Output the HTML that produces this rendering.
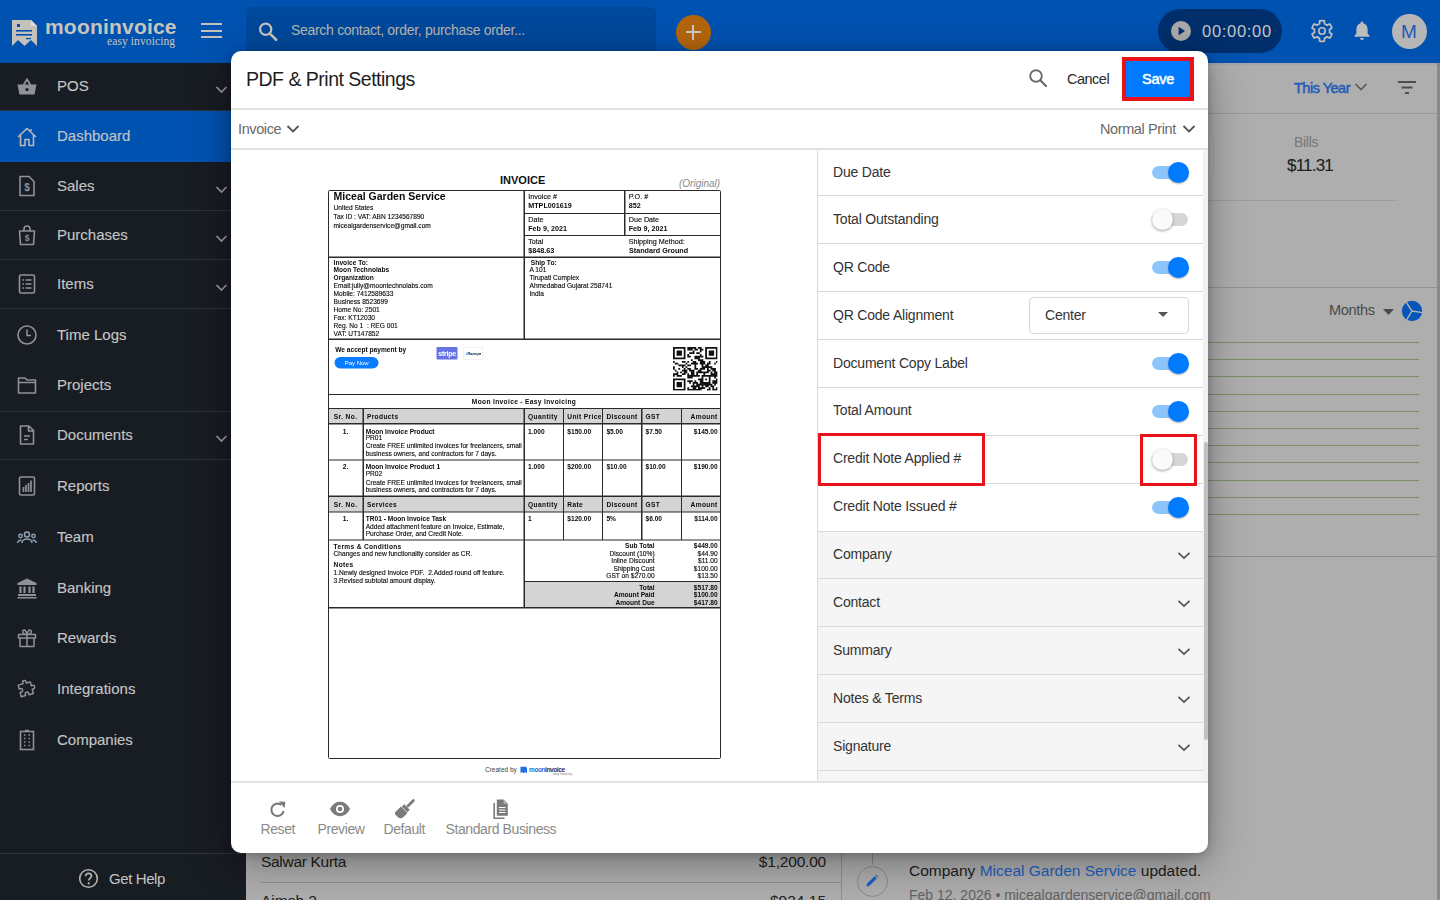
<!DOCTYPE html>
<html><head><meta charset="utf-8">
<style>
*{box-sizing:border-box;margin:0;padding:0}
html,body{width:1440px;height:900px;overflow:hidden}
body{position:relative;background:#aeaeae;font-family:"Liberation Sans",sans-serif;color:#222}
.abs{position:absolute}
#hdr{left:0;top:0;width:1440px;height:63px;background:#0052b1}
#side{left:0;top:62px;width:246px;height:838px;background:#181c23}
.si{position:absolute;left:0;width:246px;height:50px;color:#c4c4c4;font-size:15px}
.si .t{position:absolute;left:57px;top:0;line-height:50px;-webkit-text-stroke:0.15px #c4c4c4}
.si svg{position:absolute;left:16px;top:15px}
.si .chev{position:absolute;left:215px;top:24px}
.sdiv{position:absolute;left:0;width:246px;height:1px;background:#2f343a}
#modal{left:230.5px;top:51px;width:977.5px;height:802px;background:#fff;border-radius:10px;box-shadow:0 10px 40px rgba(0,0,0,.35),0 2px 10px rgba(0,0,0,.2);overflow:hidden}
.hl{position:absolute;height:1px;background:#dedede}
.row{position:absolute;left:587px;width:385px;height:48px;border-bottom:1px solid #dcdcdc;background:#fff}
.row .lb{position:absolute;left:15px;top:0;line-height:47px;font-size:14.5px;color:#333;letter-spacing:-0.2px}
.row.acc{background:#f5f5f5}
.tg{position:absolute;left:334px;top:17px;width:36px;height:13px;border-radius:7px;background:#8fc3fb}
.tg i{position:absolute;left:16px;top:-4px;width:21px;height:21px;border-radius:50%;background:#007bff;box-shadow:0 1px 3px rgba(0,0,0,.25)}
.tg.off{background:#d5d5d5}
.tg.off i{left:-1px;background:#fafafa;box-shadow:0 1px 3px rgba(0,0,0,.35)}
.acc svg{position:absolute;left:358px;top:19px}
</style></head><body>

<!-- CONTENT BG (visible parts) -->
<div class="abs" style="left:246px;top:63px;width:1194px;height:1.5px;background:#9e9fb0;opacity:.6"></div>
<div class="abs" style="left:1294px;top:79px;font-size:14.5px;color:#1f5fc0;line-height:18px;letter-spacing:-0.5px;-webkit-text-stroke:0.5px #1f5bb8;color:#1f5bb8">This Year</div>
<svg class="abs" style="left:1354px;top:82px" width="14" height="10" viewBox="0 0 14 10"><path d="M1.5 2 L7 7.5 L12.5 2" fill="none" stroke="#5a5a5a" stroke-width="1.7"/></svg>
<svg class="abs" style="left:1397px;top:80px" width="20" height="16" viewBox="0 0 20 16"><path d="M1 2h18M4.5 7.5h11M8 13h4" stroke="#4e4e4e" stroke-width="2"/></svg>
<div class="abs" style="left:246px;top:113px;width:1191px;height:1px;background:#999"></div>
<div class="abs" style="left:1213px;top:138px;width:1px;height:37px;background:#a2a2a2"></div>
<div class="abs" style="left:1294px;top:134px;font-size:14px;color:#767676;line-height:17px;letter-spacing:-0.3px">Bills</div>
<div class="abs" style="left:1287px;top:155px;font-size:17px;color:#202020;line-height:22px;letter-spacing:-0.8px;-webkit-text-stroke:0.1px #202020">$11.31</div>
<div class="abs" style="left:1208px;top:200px;width:190px;height:1px;background:#9d9d9d"></div>
<div class="abs" style="left:1208px;top:287px;width:1229px;height:1px;background:#939393"></div>
<div class="abs" style="left:1329px;top:301px;font-size:14.5px;color:#4a4a4a;line-height:18px;letter-spacing:-0.3px">Months</div>
<svg class="abs" style="left:1383px;top:308.5px" width="11" height="6" viewBox="0 0 11 6"><path d="M0 0h11L5.5 6z" fill="#4a4a4a"/></svg>
<svg class="abs" style="left:1401px;top:300px" width="22" height="22" viewBox="0 0 22 22"><circle cx="11" cy="11" r="10.2" fill="#0656b9"/><path d="M11 11 L5.2 2.2 M11 11 L21.5 12.6 M11 11 L5.4 20.2" stroke="#b2b2b2" stroke-width="1.4"/></svg>
<div class="abs" style="left:1208px;top:342px;width:211px;height:1px;background:#7a8f62"></div>
<div class="abs" style="left:1208px;top:359px;width:211px;height:1px;background:#7a8f62"></div>
<div class="abs" style="left:1208px;top:376px;width:211px;height:1px;background:#7a8f62"></div>
<div class="abs" style="left:1208px;top:394px;width:211px;height:1px;background:#7a8f62"></div>
<div class="abs" style="left:1208px;top:411px;width:211px;height:1px;background:#7a8f62"></div>
<div class="abs" style="left:1208px;top:428px;width:211px;height:1px;background:#7a8f62"></div>
<div class="abs" style="left:1208px;top:445px;width:211px;height:1px;background:#7a8f62"></div>
<div class="abs" style="left:1208px;top:462px;width:211px;height:1px;background:#7a8f62"></div>
<div class="abs" style="left:1208px;top:480px;width:211px;height:1px;background:#7a8f62"></div>
<div class="abs" style="left:1208px;top:497px;width:211px;height:1px;background:#7a8f62"></div>
<div class="abs" style="left:1208px;top:514px;width:211px;height:1px;background:#7a8f62"></div>

<div class="abs" style="left:1208px;top:556px;width:1229px;height:1px;background:#8f8f8f"></div>
<div class="abs" style="left:1437px;top:62px;width:3px;height:838px;background:#8a8a8a"></div>
<!-- bottom strip -->
<div class="abs" style="left:841px;top:853px;width:1px;height:47px;background:#8f8f8f"></div>
<div class="abs" style="left:261px;top:853px;font-size:15.5px;color:#202020;line-height:18px;letter-spacing:-0.3px;top:853px">Salwar Kurta</div>
<div class="abs" style="left:740px;top:853px;width:86px;text-align:right;font-size:15.5px;color:#202020;line-height:18px;letter-spacing:-0.2px">$1,200.00</div>
<div class="abs" style="left:261px;top:882px;width:580px;height:1px;background:#8e8e8e"></div>
<div class="abs" style="left:261px;top:891.5px;font-size:15.5px;color:#202020;line-height:18px">Aimsh 2</div>
<div class="abs" style="left:740px;top:891.5px;width:86px;text-align:right;font-size:15.5px;color:#202020;line-height:18px">$924.15</div>
<div class="abs" style="left:872px;top:853px;width:1px;height:12px;background:#8a8a8a"></div>
<div class="abs" style="left:856.5px;top:865.5px;width:31px;height:31px;border-radius:50%;border:1px solid #8a8a8a"></div>
<svg class="abs" style="left:865px;top:874px" width="14" height="14" viewBox="0 0 14 14"><path d="M1.5 12.5 L2 9.8 L9.6 2.2 L11.8 4.4 L4.2 12 Z M10.4 1.4 L11.2 0.8 L13.2 2.8 L12.6 3.6 Z" fill="#1c5ec4"/></svg>
<div class="abs" style="left:909px;top:862px;font-size:15.5px;color:#1d1d1d;line-height:18px">Company <span style="color:#1f5fc0">Miceal Garden Service</span> updated.</div>
<div class="abs" style="left:909px;top:887px;font-size:14px;color:#626262;line-height:17px">Feb 12, 2026 &#8226; micealgardenservice@gmail.com</div>
<!-- SIDEBAR -->
<div id="side" class="abs">
  <div class="abs" style="left:0;top:49px;width:246px;height:51px;background:#0052b1"></div>
  <div class="sdiv" style="top:48px"></div>
  <div class="sdiv" style="top:148px"></div>
  <div class="sdiv" style="top:197px"></div>
  <div class="sdiv" style="top:246px"></div>
  <div class="sdiv" style="top:349px"></div>
  <div class="sdiv" style="top:397px"></div>
  <div class="sdiv" style="top:791px;background:#30353b"></div>
</div>
<div class="si" style="top:61px"><span class="t">POS</span>
  <svg width="22" height="22" viewBox="0 0 22 22" style="top:15px"><path d="M7.5 9 L11 3.5 L14.5 9" fill="none" stroke="#8f9297" stroke-width="1.8"/><path d="M1.5 8.5h19l-2 10h-15z" fill="#8f9297"/><circle cx="11" cy="13.5" r="1.6" fill="#181c23"/></svg>
  <svg class="chev" width="13" height="9" viewBox="0 0 13 9"><path d="M1.5 2 L6.5 7 L11.5 2" fill="none" stroke="#9c9c9c" stroke-width="1.7"/></svg></div>
<div class="si" style="top:111px"><span class="t">Dashboard</span>
  <svg width="22" height="22" viewBox="0 0 22 22" style="top:15px"><path d="M2 11 L11 2.5 L20 11 M4.5 8.8 V19.5 H9 V13.5 H13 V19.5 H17.5 V8.8 M15 5 V3" fill="none" stroke="#b9b9b9" stroke-width="1.6" stroke-linejoin="round"/></svg></div>
<div class="si" style="top:161px"><span class="t">Sales</span>
  <svg width="22" height="22" viewBox="0 0 22 22" style="top:14px"><path d="M4 1.5 H13 L18 6.5 V20.5 H4 Z" fill="none" stroke="#8f9297" stroke-width="1.6" stroke-linejoin="round"/><text x="11" y="15.5" font-size="10" font-weight="bold" fill="#8f9297" text-anchor="middle" font-family="Liberation Sans">$</text></svg>
  <svg class="chev" width="13" height="9" viewBox="0 0 13 9"><path d="M1.5 2 L6.5 7 L11.5 2" fill="none" stroke="#9c9c9c" stroke-width="1.7"/></svg></div>
<div class="si" style="top:210px"><span class="t">Purchases</span>
  <svg width="22" height="22" viewBox="0 0 22 22" style="top:14px"><path d="M3.5 7 H18.5 L17.5 20.5 H4.5 Z M8 7 V5 A3 3 0 0 1 14 5 V7" fill="none" stroke="#8f9297" stroke-width="1.6" stroke-linejoin="round"/><text x="11" y="17" font-size="8.5" font-weight="bold" fill="#8f9297" text-anchor="middle" font-family="Liberation Sans">$</text></svg>
  <svg class="chev" width="13" height="9" viewBox="0 0 13 9"><path d="M1.5 2 L6.5 7 L11.5 2" fill="none" stroke="#9c9c9c" stroke-width="1.7"/></svg></div>
<div class="si" style="top:259px"><span class="t">Items</span>
  <svg width="22" height="22" viewBox="0 0 22 22" style="top:14px"><rect x="3.5" y="2" width="15" height="18" rx="1.5" fill="none" stroke="#8f9297" stroke-width="1.6"/><path d="M6.5 7h1.5M9.5 7h6M6.5 11h1.5M9.5 11h6M6.5 15h1.5M9.5 15h6" stroke="#8f9297" stroke-width="1.5"/></svg>
  <svg class="chev" width="13" height="9" viewBox="0 0 13 9"><path d="M1.5 2 L6.5 7 L11.5 2" fill="none" stroke="#9c9c9c" stroke-width="1.7"/></svg></div>
<div class="si" style="top:310px"><span class="t">Time Logs</span>
  <svg width="22" height="22" viewBox="0 0 22 22" style="top:14px"><circle cx="11" cy="11" r="9" fill="none" stroke="#8f9297" stroke-width="1.6"/><path d="M11 5.5V11.5H15" fill="none" stroke="#8f9297" stroke-width="1.6"/></svg></div>
<div class="si" style="top:360px"><span class="t">Projects</span>
  <svg width="22" height="22" viewBox="0 0 22 22" style="top:14px"><path d="M2.5 4 H9 L11 6 H19.5 V19 H2.5 Z M2.5 8.5 H19.5" fill="none" stroke="#8f9297" stroke-width="1.6" stroke-linejoin="round"/></svg></div>
<div class="si" style="top:410px"><span class="t">Documents</span>
  <svg width="22" height="22" viewBox="0 0 22 22" style="top:14px"><path d="M4.5 2 H13 L17.5 6.5 V20 H4.5 Z M12.5 2.5 V7 H17 M8 12h6M8 15.5h4" fill="none" stroke="#8f9297" stroke-width="1.6" stroke-linejoin="round"/></svg>
  <svg class="chev" width="13" height="9" viewBox="0 0 13 9"><path d="M1.5 2 L6.5 7 L11.5 2" fill="none" stroke="#9c9c9c" stroke-width="1.7"/></svg></div>
<div class="si" style="top:461px"><span class="t">Reports</span>
  <svg width="22" height="22" viewBox="0 0 22 22" style="top:14px"><rect x="3.5" y="2" width="15" height="18" rx="1.5" fill="none" stroke="#8f9297" stroke-width="1.6"/><path d="M7.5 17V12M10 17V10M12.5 17V8M15 17V5.5" stroke="#8f9297" stroke-width="1.7"/></svg></div>
<div class="si" style="top:512px"><span class="t">Team</span>
  <svg width="22" height="22" viewBox="0 0 22 22" style="top:15px"><circle cx="11" cy="7.5" r="2.5" fill="none" stroke="#8fa0b3" stroke-width="1.6"/><circle cx="4.5" cy="9" r="1.7" fill="none" stroke="#8fa0b3" stroke-width="1.4"/><circle cx="17.5" cy="9" r="1.7" fill="none" stroke="#8fa0b3" stroke-width="1.4"/><path d="M6 16a5 4 0 0 1 10 0M1.5 16a3 3 0 0 1 4-2.5M20.5 16a3 3 0 0 0-4-2.5" fill="none" stroke="#8fa0b3" stroke-width="1.5"/></svg></div>
<div class="si" style="top:563px"><span class="t">Banking</span>
  <svg width="22" height="22" viewBox="0 0 22 22" style="top:14px"><path d="M11 1.5 L20.5 6 V8 H1.5 V6 Z" fill="#8f9297"/><path d="M4.5 9.5V16M8.5 9.5V16M13.5 9.5V16M17.5 9.5V16" stroke="#8f9297" stroke-width="2.2"/><rect x="2" y="17" width="18" height="2" fill="#8f9297"/><rect x="1.5" y="20" width="19" height="1.5" fill="#8f9297"/></svg></div>
<div class="si" style="top:613px"><span class="t">Rewards</span>
  <svg width="22" height="22" viewBox="0 0 22 22" style="top:14px"><path d="M2.5 7.5 H19.5 V11 H2.5 Z M4 11 V19.5 H18 V11 M11 7.5 V19.5 M11 7.5 C8 7.5 5.5 6 7 3.5 C8.5 2 10.5 4.5 11 7.5 C11.5 4.5 13.5 2 15 3.5 C16.5 6 14 7.5 11 7.5" fill="none" stroke="#8f9297" stroke-width="1.5" stroke-linejoin="round"/></svg></div>
<div class="si" style="top:664px"><span class="t">Integrations</span>
  <svg width="22" height="22" viewBox="0 0 22 22" style="top:14px"><path d="M8.5 3.5 C8.5 1.5 12 1.5 12 3.5 V5 H16 V9 H17.5 C19.5 9 19.5 12.5 17.5 12.5 H16 V17 H11.5 V15.5 C11.5 13.5 8 13.5 8 15.5 V17 H3.5 V12.5 H5 C7 12.5 7 9 5 9 H3.5 V5 H8.5 Z" fill="none" stroke="#8f9297" stroke-width="1.5" stroke-linejoin="round" transform="rotate(-15 11 11)"/></svg></div>
<div class="si" style="top:715px"><span class="t">Companies</span>
  <svg width="22" height="22" viewBox="0 0 22 22" style="top:14px"><rect x="4.5" y="2.5" width="13" height="18" fill="none" stroke="#8f9297" stroke-width="1.6"/><path d="M8 6h1.5M12.5 6H14M8 9.5h1.5M12.5 9.5H14M8 13h1.5M12.5 13H14M8 16.5h1.5M12.5 16.5H14M9 1.5h4" stroke="#8f9297" stroke-width="1.6"/></svg></div>
<!-- get help -->
<svg class="abs" style="left:78px;top:868px" width="21" height="21" viewBox="0 0 21 21"><circle cx="10.5" cy="10.5" r="8.8" fill="none" stroke="#b3b3b3" stroke-width="1.6"/><path d="M7.6 8.2 C7.6 6.4 9 5.3 10.6 5.3 C12.3 5.3 13.5 6.5 13.5 8 C13.5 10 10.7 10.3 10.7 12.6" fill="none" stroke="#b3b3b3" stroke-width="1.7"/><circle cx="10.7" cy="15.4" r="1.1" fill="#b3b3b3"/></svg>
<div class="abs" style="left:109px;top:869px;font-size:15px;color:#c4c4c4;line-height:20px;letter-spacing:-0.4px">Get Help</div>
<!-- HEADER -->
<div id="hdr" class="abs">
  <!-- logo icon -->
  <svg class="abs" style="left:11px;top:19px" width="28" height="28" viewBox="0 0 28 28">
    <path d="M1 1 H20 L26 7 V27 L20 21 L13.5 27 L7 21 L1 27 Z" fill="#c5c1b9"/>
    <path d="M20 1 V7 H26" fill="#dedad3"/>
    <rect x="6" y="5" width="3" height="3" fill="#0052b1"/>
    <rect x="5" y="11" width="16" height="1.6" fill="#0052b1"/>
    <rect x="5" y="15" width="16" height="1.6" fill="#0052b1"/>
    <rect x="15" y="19" width="5" height="1.2" fill="#0052b1"/>
  </svg>
  <div class="abs" style="left:45px;top:14px;font-size:21px;font-weight:bold;color:#c8c4bc;letter-spacing:0.2px;line-height:26px">mooninvoice</div>
  <div class="abs" style="left:107px;top:35px;font-family:'Liberation Serif',serif;font-size:11.5px;color:#c8c4bc;line-height:13px;letter-spacing:0.1px">easy invoicing</div>
  <!-- hamburger -->
  <div class="abs" style="left:201px;top:23px;width:21px;height:2.4px;background:#c5c1b9"></div>
  <div class="abs" style="left:201px;top:30px;width:21px;height:2.4px;background:#c5c1b9"></div>
  <div class="abs" style="left:201px;top:35.6px;width:21px;height:2.4px;background:#c5c1b9"></div>
  <!-- search -->
  <div class="abs" style="left:246px;top:7px;width:410px;height:60px;border-radius:6px;background:#00489b"></div>
  <svg class="abs" style="left:256px;top:20px" width="24" height="24" viewBox="0 0 24 24">
    <circle cx="9.7" cy="9.3" r="5.6" fill="none" stroke="#c8c4bc" stroke-width="2.2"/>
    <path d="M13.8 13.6 L20.2 19.8" stroke="#c8c4bc" stroke-width="2.6" stroke-linecap="round"/>
  </svg>
  <div class="abs" style="left:291px;top:21px;font-size:14px;color:#b9b5ad;line-height:18px;letter-spacing:-0.3px">Search contact, order, purchase order...</div>
  <!-- plus button -->
  <div class="abs" style="left:675.5px;top:14.5px;width:35px;height:35px;border-radius:50%;background:#b4650c"></div>
  <div class="abs" style="left:685.5px;top:30.7px;width:15px;height:2.6px;background:#c9c9c9"></div>
  <div class="abs" style="left:691.7px;top:24.5px;width:2.6px;height:15px;background:#c9c9c9"></div>
  <!-- timer -->
  <div class="abs" style="left:1158px;top:9px;width:124px;height:44px;border-radius:22px;background:#002f6c"></div>
  <div class="abs" style="left:1171px;top:21px;width:20px;height:20px;border-radius:50%;background:#a9a9a9"></div>
  <svg class="abs" style="left:1171px;top:21px" width="20" height="20" viewBox="0 0 20 20"><path d="M7.6 5.8 L14 10 L7.6 14.2 Z" fill="#002f6c"/></svg>
  <div class="abs" style="left:1202px;top:21px;font-size:16.5px;color:#c4c4c4;line-height:20px;letter-spacing:0.7px">00:00:00</div>
  <!-- gear -->
  <svg class="abs" style="left:1310px;top:19px" width="24" height="24" viewBox="0 0 24 24"><path fill="none" stroke="#c4bfb8" stroke-width="1.7" stroke-linejoin="round" d="M9.53 4.81L9.66 1.87A10.4 10.4 0 0 1 14.34 1.87L14.47 4.81A7.6 7.6 0 0 1 16.99 6.26L19.61 4.91A10.4 10.4 0 0 1 21.95 8.96L19.46 10.55A7.6 7.6 0 0 1 19.46 13.45L21.95 15.04A10.4 10.4 0 0 1 19.61 19.09L16.99 17.74A7.6 7.6 0 0 1 14.47 19.19L14.34 22.13A10.4 10.4 0 0 1 9.66 22.13L9.53 19.19A7.6 7.6 0 0 1 7.01 17.74L4.39 19.09A10.4 10.4 0 0 1 2.05 15.04L4.54 13.45A7.6 7.6 0 0 1 4.54 10.55L2.05 8.96A10.4 10.4 0 0 1 4.39 4.91L7.01 6.26A7.6 7.6 0 0 1 9.53 4.81Z"/><circle cx="12" cy="12" r="3.2" fill="none" stroke="#c4bfb8" stroke-width="1.6"/></svg>
  <!-- bell -->
  <svg class="abs" style="left:1352px;top:20px" width="20" height="22" viewBox="0 0 20 22">
    <path fill="#bdbdbd" d="M10 1.5c.8 0 1.3.6 1.3 1.3v.5c2.6.6 4.3 2.9 4.3 5.6v4.6l1.9 2.3v.9H2.5v-.9l1.9-2.3V8.9c0-2.7 1.7-5 4.3-5.6v-.5c0-.7.5-1.3 1.3-1.3z"/>
    <path fill="#bdbdbd" d="M8 18h4c0 1.1-.9 2-2 2s-2-.9-2-2z"/>
  </svg>
  <!-- avatar -->
  <div class="abs" style="left:1391.5px;top:13.5px;width:35px;height:35px;border-radius:50%;background:#b6b6b6;color:#1f58b4;font-size:19px;text-align:center;line-height:35px">M</div>
</div>
<!-- MODAL -->
<div id="modal" class="abs"><div class="abs" style="left:0.5px;top:0;width:977px;height:802px">
  <div class="abs" style="left:15px;top:16px;font-size:19.5px;color:#1e1e1e;letter-spacing:-0.5px;line-height:24px">PDF &amp; Print Settings</div>
  <svg class="abs" style="left:797px;top:17px" width="20" height="20" viewBox="0 0 20 20"><circle cx="8" cy="8" r="5.8" fill="none" stroke="#6a6a6a" stroke-width="1.9"/><path d="M12.3 12.3 L18 18" stroke="#6a6a6a" stroke-width="2.2" stroke-linecap="round"/></svg>
  <div class="abs" style="left:836px;top:19px;font-size:14.5px;color:#2a2a2a;line-height:18px;letter-spacing:-0.5px">Cancel</div>
  <div class="abs" style="left:891px;top:6px;width:72px;height:44px;border:4px solid #e8121a;background:#007bff"></div>
  <div class="abs" style="left:895px;top:19px;width:64px;text-align:center;font-size:14.5px;color:#fff;line-height:18px;letter-spacing:-0.3px;-webkit-text-stroke:0.5px #fff">Save</div>
  <div class="hl" style="left:0;top:57px;width:977px;height:2px;background:#e2e2e2"></div>
  <div class="abs" style="left:7px;top:69px;font-size:14.5px;color:#6a6a6a;line-height:18px;letter-spacing:-0.4px">Invoice</div>
  <svg class="abs" style="left:55px;top:73px" width="14" height="10" viewBox="0 0 14 10"><path d="M1.5 2 L7 7.5 L12.5 2" fill="none" stroke="#555" stroke-width="1.8"/></svg>
  <div class="abs" style="left:869px;top:69px;font-size:14.5px;color:#6a6a6a;line-height:18px;letter-spacing:-0.4px">Normal Print</div>
  <svg class="abs" style="left:951px;top:73px" width="14" height="10" viewBox="0 0 14 10"><path d="M1.5 2 L7 7.5 L12.5 2" fill="none" stroke="#555" stroke-width="1.8"/></svg>
  <div class="hl" style="left:0;top:97px;width:977px;height:2px;background:#e2e2e2"></div>

  <!-- left pane -->
  <div class="abs" style="left:586px;top:99px;width:1px;height:632px;background:#dcdcdc"></div>
  <div class="abs" style="left:97.3px;top:139px;width:786px;height:1138px;transform:scale(0.5);transform-origin:0 0;color:#111">
<div class="abs" style="left:0px;top:437px;width:786px;height:30.399999999999977px;background:#d4d4d4"></div>
<div class="abs" style="left:0px;top:612.2px;width:786px;height:31.799999999999955px;background:#d4d4d4"></div>
<div class="abs" style="left:392.4px;top:782.8px;width:393.6px;height:52.80000000000007px;background:#d4d4d4"></div>
<div class="abs" style="left:0;top:0;width:786px;height:1138px;border:2.8px solid #2a2a2a;border-radius:3px"></div>
<div class="abs" style="left:392.4px;top:45.6px;width:393.6px;height:2px;background:#2a2a2a"></div>
<div class="abs" style="left:392.4px;top:89.6px;width:393.6px;height:2px;background:#2a2a2a"></div>
<div class="abs" style="left:0px;top:133.2px;width:786px;height:2.4px;background:#2a2a2a"></div>
<div class="abs" style="left:0px;top:297.2px;width:786px;height:2.4px;background:#2a2a2a"></div>
<div class="abs" style="left:0px;top:407.7px;width:786px;height:2.6px;background:#2a2a2a"></div>
<div class="abs" style="left:0px;top:435.7px;width:786px;height:2.6px;background:#2a2a2a"></div>
<div class="abs" style="left:0px;top:466.2px;width:786px;height:2.4px;background:#2a2a2a"></div>
<div class="abs" style="left:0px;top:538.6px;width:786px;height:2.4px;background:#2a2a2a"></div>
<div class="abs" style="left:0px;top:610.6px;width:786px;height:3.2px;background:#2a2a2a"></div>
<div class="abs" style="left:0px;top:642.8px;width:786px;height:2.4px;background:#2a2a2a"></div>
<div class="abs" style="left:0px;top:698.9px;width:786px;height:2.6px;background:#2a2a2a"></div>
<div class="abs" style="left:392.4px;top:781.6px;width:393.6px;height:2.4px;background:#2a2a2a"></div>
<div class="abs" style="left:0px;top:834.2px;width:786px;height:2.8px;background:#2a2a2a"></div>
<div class="abs" style="left:391.2px;top:0px;width:2.4px;height:298.4px;background:#2a2a2a"></div>
<div class="abs" style="left:592.2px;top:0px;width:2.4px;height:90.6px;background:#2a2a2a"></div>
<div class="abs" style="left:69.2px;top:437px;width:2.4px;height:263.20000000000005px;background:#2a2a2a"></div>
<div class="abs" style="left:391.4px;top:437px;width:2.4px;height:263.20000000000005px;background:#2a2a2a"></div>
<div class="abs" style="left:469.8px;top:437px;width:2.4px;height:263.20000000000005px;background:#2a2a2a"></div>
<div class="abs" style="left:548.0px;top:437px;width:2.4px;height:263.20000000000005px;background:#2a2a2a"></div>
<div class="abs" style="left:626.2px;top:437px;width:2.4px;height:263.20000000000005px;background:#2a2a2a"></div>
<div class="abs" style="left:705.8px;top:437px;width:2.4px;height:263.20000000000005px;background:#2a2a2a"></div>
<div class="abs" style="left:391.2px;top:700.2px;width:2.4px;height:135.39999999999998px;background:#2a2a2a"></div>
<div class="abs" style="left:11.2px;top:1.1px;font-size:21px;font-weight:bold;color:#0a0a0a;line-height:24.1px;white-space:nowrap;">Miceal Garden Service</div>
<div class="abs" style="left:11.2px;top:28.4px;font-size:13.2px;font-weight:normal;color:#0a0a0a;line-height:15.2px;white-space:nowrap;-webkit-text-stroke:0.25px #0a0a0a;">United States</div>
<div class="abs" style="left:11.2px;top:46.3px;font-size:13.2px;font-weight:normal;color:#0a0a0a;line-height:15.2px;white-space:nowrap;-webkit-text-stroke:0.25px #0a0a0a;">Tax ID : VAT: ABN 1234567890</div>
<div class="abs" style="left:11.2px;top:63.8px;font-size:13.2px;font-weight:normal;color:#0a0a0a;line-height:15.2px;white-space:nowrap;-webkit-text-stroke:0.25px #0a0a0a;">micealgardenservice@gmail.com</div>
<div class="abs" style="left:400.4px;top:3.5px;font-size:14.4px;font-weight:normal;color:#0a0a0a;line-height:16.6px;white-space:nowrap;-webkit-text-stroke:0.25px #0a0a0a;">Invoice #</div>
<div class="abs" style="left:400.4px;top:22.7px;font-size:14.4px;font-weight:bold;color:#0a0a0a;line-height:16.6px;white-space:nowrap;">MTPL001619</div>
<div class="abs" style="left:601.4px;top:3.5px;font-size:14.4px;font-weight:normal;color:#0a0a0a;line-height:16.6px;white-space:nowrap;-webkit-text-stroke:0.25px #0a0a0a;">P.O. #</div>
<div class="abs" style="left:601.4px;top:22.7px;font-size:14.4px;font-weight:bold;color:#0a0a0a;line-height:16.6px;white-space:nowrap;">852</div>
<div class="abs" style="left:400.4px;top:50.7px;font-size:14.4px;font-weight:normal;color:#0a0a0a;line-height:16.6px;white-space:nowrap;-webkit-text-stroke:0.25px #0a0a0a;">Date</div>
<div class="abs" style="left:400.4px;top:68.7px;font-size:14.4px;font-weight:bold;color:#0a0a0a;line-height:16.6px;white-space:nowrap;">Feb 9, 2021</div>
<div class="abs" style="left:601.4px;top:50.7px;font-size:14.4px;font-weight:normal;color:#0a0a0a;line-height:16.6px;white-space:nowrap;-webkit-text-stroke:0.25px #0a0a0a;">Due Date</div>
<div class="abs" style="left:601.4px;top:68.7px;font-size:14.4px;font-weight:bold;color:#0a0a0a;line-height:16.6px;white-space:nowrap;">Feb 9, 2021</div>
<div class="abs" style="left:400.4px;top:95.3px;font-size:14.4px;font-weight:normal;color:#0a0a0a;line-height:16.6px;white-space:nowrap;-webkit-text-stroke:0.25px #0a0a0a;">Total</div>
<div class="abs" style="left:400.4px;top:112.7px;font-size:14.4px;font-weight:bold;color:#0a0a0a;line-height:16.6px;white-space:nowrap;">$848.63</div>
<div class="abs" style="left:601.4px;top:95.3px;font-size:14.4px;font-weight:normal;color:#0a0a0a;line-height:16.6px;white-space:nowrap;-webkit-text-stroke:0.25px #0a0a0a;">Shipping Method:</div>
<div class="abs" style="left:602.0px;top:112.7px;font-size:14.4px;font-weight:bold;color:#0a0a0a;line-height:16.6px;white-space:nowrap;">Standard Ground</div>
<div class="abs" style="left:11.2px;top:138.0px;font-size:13.2px;font-weight:bold;color:#0a0a0a;line-height:15.2px;white-space:nowrap;">Invoice To:</div>
<div class="abs" style="left:11.2px;top:152.4px;font-size:13.2px;font-weight:bold;color:#0a0a0a;line-height:15.2px;white-space:nowrap;">Moon Technolabs</div>
<div class="abs" style="left:11.2px;top:168.2px;font-size:13.2px;font-weight:bold;color:#0a0a0a;line-height:15.2px;white-space:nowrap;">Organization</div>
<div class="abs" style="left:11.2px;top:184.0px;font-size:13.2px;font-weight:normal;color:#0a0a0a;line-height:15.2px;white-space:nowrap;-webkit-text-stroke:0.25px #0a0a0a;">Email:jully@moontechnolabs.com</div>
<div class="abs" style="left:11.2px;top:200.0px;font-size:13.2px;font-weight:normal;color:#0a0a0a;line-height:15.2px;white-space:nowrap;-webkit-text-stroke:0.25px #0a0a0a;">Mobile: 7412589633</div>
<div class="abs" style="left:11.2px;top:215.8px;font-size:13.2px;font-weight:normal;color:#0a0a0a;line-height:15.2px;white-space:nowrap;-webkit-text-stroke:0.25px #0a0a0a;">Business 8523699</div>
<div class="abs" style="left:11.2px;top:231.6px;font-size:13.2px;font-weight:normal;color:#0a0a0a;line-height:15.2px;white-space:nowrap;-webkit-text-stroke:0.25px #0a0a0a;">Home No: 2501</div>
<div class="abs" style="left:11.2px;top:247.6px;font-size:13.2px;font-weight:normal;color:#0a0a0a;line-height:15.2px;white-space:nowrap;-webkit-text-stroke:0.25px #0a0a0a;">Fax: KT12030</div>
<div class="abs" style="left:11.2px;top:263.4px;font-size:13.2px;font-weight:normal;color:#0a0a0a;line-height:15.2px;white-space:nowrap;-webkit-text-stroke:0.25px #0a0a0a;">Reg. No 1&nbsp; : REG 001</div>
<div class="abs" style="left:11.2px;top:279.6px;font-size:13.2px;font-weight:normal;color:#0a0a0a;line-height:15.2px;white-space:nowrap;-webkit-text-stroke:0.25px #0a0a0a;">VAT: UT147852</div>
<div class="abs" style="left:405.5px;top:138.0px;font-size:13.2px;font-weight:bold;color:#0a0a0a;line-height:15.2px;white-space:nowrap;">Ship To:</div>
<div class="abs" style="left:403.0px;top:152.4px;font-size:13.2px;font-weight:normal;color:#0a0a0a;line-height:15.2px;white-space:nowrap;-webkit-text-stroke:0.25px #0a0a0a;">A 101</div>
<div class="abs" style="left:403.0px;top:168.2px;font-size:13.2px;font-weight:normal;color:#0a0a0a;line-height:15.2px;white-space:nowrap;-webkit-text-stroke:0.25px #0a0a0a;">Tirupati Complex</div>
<div class="abs" style="left:403.0px;top:184.0px;font-size:13.2px;font-weight:normal;color:#0a0a0a;line-height:15.2px;white-space:nowrap;-webkit-text-stroke:0.25px #0a0a0a;">Ahmedabad Gujarat 258741</div>
<div class="abs" style="left:403.0px;top:200.0px;font-size:13.2px;font-weight:normal;color:#0a0a0a;line-height:15.2px;white-space:nowrap;-webkit-text-stroke:0.25px #0a0a0a;">India</div>
<div class="abs" style="left:14.4px;top:311.8px;font-size:13.2px;font-weight:bold;color:#0a0a0a;line-height:15.2px;white-space:nowrap;">We accept payment by</div>
<div class="abs" style="left:13.4px;top:334px;width:88px;height:23.2px;border-radius:12px;background:#0a7cff;color:#fff;font-size:12px;line-height:23px;text-align:center">Pay Now</div>
<div class="abs" style="left:217.4px;top:313.8px;width:41.6px;height:25.2px;border-radius:2px;background:#6772e5;color:#fff;font-size:14px;font-weight:bold;line-height:25px;text-align:center;letter-spacing:-0.5px">stripe</div>
<div class="abs" style="left:270.4px;top:313.8px;width:38.4px;height:25.2px;border:1px solid #e3e3e3;background:#fff"><svg class="abs" style="left:3px;top:7px" width="32" height="10" viewBox="0 0 32 10"><path d="M1.5 8 L4 2 L5 2 L3.5 8Z" fill="#3395ff"/><text x="5" y="7.6" font-size="7.5" font-weight="bold" font-style="italic" fill="#072654" font-family="Liberation Sans" letter-spacing="-0.2">Razorpay</text></svg></div>
<svg class="abs" style="left:690px;top:313.8px" width="89.4" height="87.6" viewBox="0 0 25 25" preserveAspectRatio="none"><path d="M0 0h1v1h-1zM1 0h1v1h-1zM2 0h1v1h-1zM3 0h1v1h-1zM4 0h1v1h-1zM5 0h1v1h-1zM6 0h1v1h-1zM8 0h1v1h-1zM9 0h1v1h-1zM10 0h1v1h-1zM11 0h1v1h-1zM12 0h1v1h-1zM14 0h1v1h-1zM15 0h1v1h-1zM18 0h1v1h-1zM19 0h1v1h-1zM20 0h1v1h-1zM21 0h1v1h-1zM22 0h1v1h-1zM23 0h1v1h-1zM24 0h1v1h-1zM0 1h1v1h-1zM6 1h1v1h-1zM8 1h1v1h-1zM9 1h1v1h-1zM10 1h1v1h-1zM12 1h1v1h-1zM13 1h1v1h-1zM15 1h1v1h-1zM16 1h1v1h-1zM18 1h1v1h-1zM24 1h1v1h-1zM0 2h1v1h-1zM2 2h1v1h-1zM3 2h1v1h-1zM4 2h1v1h-1zM6 2h1v1h-1zM11 2h1v1h-1zM15 2h1v1h-1zM18 2h1v1h-1zM20 2h1v1h-1zM21 2h1v1h-1zM22 2h1v1h-1zM24 2h1v1h-1zM0 3h1v1h-1zM2 3h1v1h-1zM3 3h1v1h-1zM4 3h1v1h-1zM6 3h1v1h-1zM9 3h1v1h-1zM10 3h1v1h-1zM11 3h1v1h-1zM13 3h1v1h-1zM14 3h1v1h-1zM18 3h1v1h-1zM20 3h1v1h-1zM21 3h1v1h-1zM22 3h1v1h-1zM24 3h1v1h-1zM0 4h1v1h-1zM2 4h1v1h-1zM3 4h1v1h-1zM4 4h1v1h-1zM6 4h1v1h-1zM8 4h1v1h-1zM15 4h1v1h-1zM18 4h1v1h-1zM20 4h1v1h-1zM21 4h1v1h-1zM22 4h1v1h-1zM24 4h1v1h-1zM0 5h1v1h-1zM6 5h1v1h-1zM8 5h1v1h-1zM9 5h1v1h-1zM12 5h1v1h-1zM13 5h1v1h-1zM14 5h1v1h-1zM15 5h1v1h-1zM16 5h1v1h-1zM18 5h1v1h-1zM24 5h1v1h-1zM0 6h1v1h-1zM1 6h1v1h-1zM2 6h1v1h-1zM3 6h1v1h-1zM4 6h1v1h-1zM5 6h1v1h-1zM6 6h1v1h-1zM12 6h1v1h-1zM13 6h1v1h-1zM14 6h1v1h-1zM18 6h1v1h-1zM19 6h1v1h-1zM20 6h1v1h-1zM21 6h1v1h-1zM22 6h1v1h-1zM23 6h1v1h-1zM24 6h1v1h-1zM10 7h1v1h-1zM14 7h1v1h-1zM15 7h1v1h-1zM16 7h1v1h-1zM0 8h1v1h-1zM5 8h1v1h-1zM6 8h1v1h-1zM8 8h1v1h-1zM11 8h1v1h-1zM12 8h1v1h-1zM15 8h1v1h-1zM16 8h1v1h-1zM17 8h1v1h-1zM20 8h1v1h-1zM24 8h1v1h-1zM1 9h1v1h-1zM2 9h1v1h-1zM7 9h1v1h-1zM10 9h1v1h-1zM11 9h1v1h-1zM12 9h1v1h-1zM13 9h1v1h-1zM15 9h1v1h-1zM16 9h1v1h-1zM17 9h1v1h-1zM19 9h1v1h-1zM20 9h1v1h-1zM23 9h1v1h-1zM3 10h1v1h-1zM4 10h1v1h-1zM5 10h1v1h-1zM6 10h1v1h-1zM8 10h1v1h-1zM9 10h1v1h-1zM12 10h1v1h-1zM16 10h1v1h-1zM18 10h1v1h-1zM19 10h1v1h-1zM0 11h1v1h-1zM5 11h1v1h-1zM7 11h1v1h-1zM12 11h1v1h-1zM16 11h1v1h-1zM17 11h1v1h-1zM18 11h1v1h-1zM19 11h1v1h-1zM20 11h1v1h-1zM21 11h1v1h-1zM0 12h1v1h-1zM3 12h1v1h-1zM6 12h1v1h-1zM8 12h1v1h-1zM9 12h1v1h-1zM12 12h1v1h-1zM13 12h1v1h-1zM15 12h1v1h-1zM16 12h1v1h-1zM17 12h1v1h-1zM19 12h1v1h-1zM21 12h1v1h-1zM22 12h1v1h-1zM23 12h1v1h-1zM1 13h1v1h-1zM5 13h1v1h-1zM6 13h1v1h-1zM7 13h1v1h-1zM9 13h1v1h-1zM10 13h1v1h-1zM11 13h1v1h-1zM14 13h1v1h-1zM15 13h1v1h-1zM19 13h1v1h-1zM20 13h1v1h-1zM22 13h1v1h-1zM23 13h1v1h-1zM2 14h1v1h-1zM4 14h1v1h-1zM6 14h1v1h-1zM7 14h1v1h-1zM10 14h1v1h-1zM11 14h1v1h-1zM13 14h1v1h-1zM14 14h1v1h-1zM15 14h1v1h-1zM16 14h1v1h-1zM17 14h1v1h-1zM18 14h1v1h-1zM19 14h1v1h-1zM21 14h1v1h-1zM23 14h1v1h-1zM24 14h1v1h-1zM0 15h1v1h-1zM1 15h1v1h-1zM2 15h1v1h-1zM5 15h1v1h-1zM6 15h1v1h-1zM8 15h1v1h-1zM10 15h1v1h-1zM11 15h1v1h-1zM13 15h1v1h-1zM17 15h1v1h-1zM21 15h1v1h-1zM22 15h1v1h-1zM23 15h1v1h-1zM24 15h1v1h-1zM0 16h1v1h-1zM2 16h1v1h-1zM3 16h1v1h-1zM4 16h1v1h-1zM8 16h1v1h-1zM9 16h1v1h-1zM10 16h1v1h-1zM11 16h1v1h-1zM12 16h1v1h-1zM13 16h1v1h-1zM14 16h1v1h-1zM16 16h1v1h-1zM17 16h1v1h-1zM18 16h1v1h-1zM19 16h1v1h-1zM20 16h1v1h-1zM21 16h1v1h-1zM22 16h1v1h-1zM23 16h1v1h-1zM24 16h1v1h-1zM8 17h1v1h-1zM9 17h1v1h-1zM10 17h1v1h-1zM16 17h1v1h-1zM20 17h1v1h-1zM23 17h1v1h-1zM0 18h1v1h-1zM1 18h1v1h-1zM2 18h1v1h-1zM3 18h1v1h-1zM4 18h1v1h-1zM5 18h1v1h-1zM6 18h1v1h-1zM14 18h1v1h-1zM15 18h1v1h-1zM16 18h1v1h-1zM18 18h1v1h-1zM20 18h1v1h-1zM24 18h1v1h-1zM0 19h1v1h-1zM6 19h1v1h-1zM8 19h1v1h-1zM9 19h1v1h-1zM10 19h1v1h-1zM12 19h1v1h-1zM15 19h1v1h-1zM16 19h1v1h-1zM20 19h1v1h-1zM22 19h1v1h-1zM23 19h1v1h-1zM24 19h1v1h-1zM0 20h1v1h-1zM2 20h1v1h-1zM3 20h1v1h-1zM4 20h1v1h-1zM6 20h1v1h-1zM9 20h1v1h-1zM11 20h1v1h-1zM12 20h1v1h-1zM13 20h1v1h-1zM15 20h1v1h-1zM16 20h1v1h-1zM17 20h1v1h-1zM18 20h1v1h-1zM19 20h1v1h-1zM20 20h1v1h-1zM22 20h1v1h-1zM23 20h1v1h-1zM24 20h1v1h-1zM0 21h1v1h-1zM2 21h1v1h-1zM3 21h1v1h-1zM4 21h1v1h-1zM6 21h1v1h-1zM11 21h1v1h-1zM13 21h1v1h-1zM14 21h1v1h-1zM15 21h1v1h-1zM16 21h1v1h-1zM17 21h1v1h-1zM18 21h1v1h-1zM19 21h1v1h-1zM20 21h1v1h-1zM21 21h1v1h-1zM23 21h1v1h-1zM0 22h1v1h-1zM2 22h1v1h-1zM3 22h1v1h-1zM4 22h1v1h-1zM6 22h1v1h-1zM10 22h1v1h-1zM11 22h1v1h-1zM12 22h1v1h-1zM13 22h1v1h-1zM14 22h1v1h-1zM16 22h1v1h-1zM18 22h1v1h-1zM19 22h1v1h-1zM21 22h1v1h-1zM22 22h1v1h-1zM0 23h1v1h-1zM6 23h1v1h-1zM8 23h1v1h-1zM11 23h1v1h-1zM12 23h1v1h-1zM14 23h1v1h-1zM15 23h1v1h-1zM16 23h1v1h-1zM17 23h1v1h-1zM20 23h1v1h-1zM22 23h1v1h-1zM24 23h1v1h-1zM0 24h1v1h-1zM1 24h1v1h-1zM2 24h1v1h-1zM3 24h1v1h-1zM4 24h1v1h-1zM5 24h1v1h-1zM6 24h1v1h-1zM8 24h1v1h-1zM9 24h1v1h-1zM10 24h1v1h-1zM11 24h1v1h-1zM12 24h1v1h-1zM13 24h1v1h-1zM14 24h1v1h-1zM15 24h1v1h-1zM19 24h1v1h-1zM20 24h1v1h-1zM22 24h1v1h-1zM23 24h1v1h-1zM24 24h1v1h-1z" fill="#111"/></svg>
<div class="abs" style="left:192.0px;width:400px;text-align:center;top:415.8px;font-size:13.2px;font-weight:bold;color:#0a0a0a;line-height:15.2px;white-space:nowrap;letter-spacing:0.7px">Moon Invoice - Easy Invoicing</div>
<div class="abs" style="left:-164.8px;width:400px;text-align:center;top:444.8px;font-size:13.2px;font-weight:bold;color:#0a0a0a;line-height:15.2px;white-space:nowrap;letter-spacing:0.75px">Sr. No.</div>
<div class="abs" style="left:77.8px;top:444.8px;font-size:13.2px;font-weight:bold;color:#0a0a0a;line-height:15.2px;white-space:nowrap;letter-spacing:0.75px">Products</div>
<div class="abs" style="left:400.2px;top:444.8px;font-size:13.2px;font-weight:bold;color:#0a0a0a;line-height:15.2px;white-space:nowrap;letter-spacing:0.75px">Quantity</div>
<div class="abs" style="left:478.6px;top:444.8px;font-size:13.2px;font-weight:bold;color:#0a0a0a;line-height:15.2px;white-space:nowrap;letter-spacing:0.75px">Unit Price</div>
<div class="abs" style="left:556.8px;top:444.8px;font-size:13.2px;font-weight:bold;color:#0a0a0a;line-height:15.2px;white-space:nowrap;letter-spacing:0.75px">Discount</div>
<div class="abs" style="left:635.0px;top:444.8px;font-size:13.2px;font-weight:bold;color:#0a0a0a;line-height:15.2px;white-space:nowrap;letter-spacing:0.75px">GST</div>
<div class="abs" style="left:379.4px;width:400px;text-align:right;top:444.8px;font-size:13.2px;font-weight:bold;color:#0a0a0a;line-height:15.2px;white-space:nowrap;letter-spacing:0.75px">Amount</div>
<div class="abs" style="left:-164.8px;width:400px;text-align:center;top:474.8px;font-size:13.2px;font-weight:bold;color:#0a0a0a;line-height:15.2px;white-space:nowrap;">1.</div>
<div class="abs" style="left:75.4px;top:474.8px;font-size:13.2px;font-weight:bold;color:#0a0a0a;line-height:15.2px;white-space:nowrap;">Moon Invoice Product</div>
<div class="abs" style="left:75.4px;top:487.5px;font-size:13.2px;font-weight:normal;color:#0a0a0a;line-height:15.2px;white-space:nowrap;-webkit-text-stroke:0.25px #0a0a0a;">PR01</div>
<div class="abs" style="left:75.4px;top:504.2px;font-size:13.2px;font-weight:normal;color:#0a0a0a;line-height:15.2px;white-space:nowrap;-webkit-text-stroke:0.25px #0a0a0a;">Create FREE unlimited invoices for freelancers, small</div>
<div class="abs" style="left:75.4px;top:519.2px;font-size:13.2px;font-weight:normal;color:#0a0a0a;line-height:15.2px;white-space:nowrap;-webkit-text-stroke:0.25px #0a0a0a;">business owners, and contractors for 7 days.</div>
<div class="abs" style="left:400.2px;top:474.8px;font-size:13.2px;font-weight:bold;color:#0a0a0a;line-height:15.2px;white-space:nowrap;">1.000</div>
<div class="abs" style="left:478.6px;top:474.8px;font-size:13.2px;font-weight:bold;color:#0a0a0a;line-height:15.2px;white-space:nowrap;">$150.00</div>
<div class="abs" style="left:556.8px;top:474.8px;font-size:13.2px;font-weight:bold;color:#0a0a0a;line-height:15.2px;white-space:nowrap;">$5.00</div>
<div class="abs" style="left:635.0px;top:474.8px;font-size:13.2px;font-weight:bold;color:#0a0a0a;line-height:15.2px;white-space:nowrap;">$7.50</div>
<div class="abs" style="left:379.4px;width:400px;text-align:right;top:474.8px;font-size:13.2px;font-weight:bold;color:#0a0a0a;line-height:15.2px;white-space:nowrap;">$145.00</div>
<div class="abs" style="left:-164.8px;width:400px;text-align:center;top:544.8px;font-size:13.2px;font-weight:bold;color:#0a0a0a;line-height:15.2px;white-space:nowrap;">2.</div>
<div class="abs" style="left:75.4px;top:544.8px;font-size:13.2px;font-weight:bold;color:#0a0a0a;line-height:15.2px;white-space:nowrap;">Moon Invoice Product 1</div>
<div class="abs" style="left:75.4px;top:560.4px;font-size:13.2px;font-weight:normal;color:#0a0a0a;line-height:15.2px;white-space:nowrap;-webkit-text-stroke:0.25px #0a0a0a;">PR02</div>
<div class="abs" style="left:75.4px;top:577.4px;font-size:13.2px;font-weight:normal;color:#0a0a0a;line-height:15.2px;white-space:nowrap;-webkit-text-stroke:0.25px #0a0a0a;">Create FREE unlimited invoices for freelancers, small</div>
<div class="abs" style="left:75.4px;top:592.2px;font-size:13.2px;font-weight:normal;color:#0a0a0a;line-height:15.2px;white-space:nowrap;-webkit-text-stroke:0.25px #0a0a0a;">business owners, and contractors for 7 days.</div>
<div class="abs" style="left:400.2px;top:544.8px;font-size:13.2px;font-weight:bold;color:#0a0a0a;line-height:15.2px;white-space:nowrap;">1.000</div>
<div class="abs" style="left:478.6px;top:544.8px;font-size:13.2px;font-weight:bold;color:#0a0a0a;line-height:15.2px;white-space:nowrap;">$200.00</div>
<div class="abs" style="left:556.8px;top:544.8px;font-size:13.2px;font-weight:bold;color:#0a0a0a;line-height:15.2px;white-space:nowrap;">$10.00</div>
<div class="abs" style="left:635.0px;top:544.8px;font-size:13.2px;font-weight:bold;color:#0a0a0a;line-height:15.2px;white-space:nowrap;">$10.00</div>
<div class="abs" style="left:379.4px;width:400px;text-align:right;top:544.8px;font-size:13.2px;font-weight:bold;color:#0a0a0a;line-height:15.2px;white-space:nowrap;">$190.00</div>
<div class="abs" style="left:-164.8px;width:400px;text-align:center;top:621.8px;font-size:13.2px;font-weight:bold;color:#0a0a0a;line-height:15.2px;white-space:nowrap;letter-spacing:0.75px">Sr. No.</div>
<div class="abs" style="left:77.8px;top:621.8px;font-size:13.2px;font-weight:bold;color:#0a0a0a;line-height:15.2px;white-space:nowrap;letter-spacing:0.75px">Services</div>
<div class="abs" style="left:400.2px;top:621.8px;font-size:13.2px;font-weight:bold;color:#0a0a0a;line-height:15.2px;white-space:nowrap;letter-spacing:0.75px">Quantity</div>
<div class="abs" style="left:478.6px;top:621.8px;font-size:13.2px;font-weight:bold;color:#0a0a0a;line-height:15.2px;white-space:nowrap;letter-spacing:0.75px">Rate</div>
<div class="abs" style="left:556.8px;top:621.8px;font-size:13.2px;font-weight:bold;color:#0a0a0a;line-height:15.2px;white-space:nowrap;letter-spacing:0.75px">Discount</div>
<div class="abs" style="left:635.0px;top:621.8px;font-size:13.2px;font-weight:bold;color:#0a0a0a;line-height:15.2px;white-space:nowrap;letter-spacing:0.75px">GST</div>
<div class="abs" style="left:379.4px;width:400px;text-align:right;top:621.8px;font-size:13.2px;font-weight:bold;color:#0a0a0a;line-height:15.2px;white-space:nowrap;letter-spacing:0.75px">Amount</div>
<div class="abs" style="left:-164.8px;width:400px;text-align:center;top:649.8px;font-size:13.2px;font-weight:bold;color:#0a0a0a;line-height:15.2px;white-space:nowrap;">1.</div>
<div class="abs" style="left:75.4px;top:649.8px;font-size:13.2px;font-weight:bold;color:#0a0a0a;line-height:15.2px;white-space:nowrap;">TR01 - Moon Invoice Task</div>
<div class="abs" style="left:75.4px;top:664.6px;font-size:13.2px;font-weight:normal;color:#0a0a0a;line-height:15.2px;white-space:nowrap;-webkit-text-stroke:0.25px #0a0a0a;">Added attachment feature on Invoice, Estimate,</div>
<div class="abs" style="left:75.4px;top:679.2px;font-size:13.2px;font-weight:normal;color:#0a0a0a;line-height:15.2px;white-space:nowrap;-webkit-text-stroke:0.25px #0a0a0a;">Purchase Order, and Credit Note.</div>
<div class="abs" style="left:400.2px;top:649.8px;font-size:13.2px;font-weight:bold;color:#0a0a0a;line-height:15.2px;white-space:nowrap;">1</div>
<div class="abs" style="left:478.6px;top:649.8px;font-size:13.2px;font-weight:bold;color:#0a0a0a;line-height:15.2px;white-space:nowrap;">$120.00</div>
<div class="abs" style="left:556.8px;top:649.8px;font-size:13.2px;font-weight:bold;color:#0a0a0a;line-height:15.2px;white-space:nowrap;">5%</div>
<div class="abs" style="left:635.0px;top:649.8px;font-size:13.2px;font-weight:bold;color:#0a0a0a;line-height:15.2px;white-space:nowrap;">$6.00</div>
<div class="abs" style="left:379.4px;width:400px;text-align:right;top:649.8px;font-size:13.2px;font-weight:bold;color:#0a0a0a;line-height:15.2px;white-space:nowrap;">$114.00</div>
<div class="abs" style="left:11.2px;top:706.0px;font-size:13.2px;font-weight:bold;color:#0a0a0a;line-height:15.2px;white-space:nowrap;letter-spacing:0.65px">Terms &amp; Conditions</div>
<div class="abs" style="left:11.2px;top:719.8px;font-size:13.2px;font-weight:normal;color:#0a0a0a;line-height:15.2px;white-space:nowrap;-webkit-text-stroke:0.25px #0a0a0a;">Changes and new functionality consider as CR.</div>
<div class="abs" style="left:11.2px;top:741.8px;font-size:13.2px;font-weight:bold;color:#0a0a0a;line-height:15.2px;white-space:nowrap;letter-spacing:0.6px">Notes</div>
<div class="abs" style="left:11.2px;top:757.4px;font-size:13.2px;font-weight:normal;color:#0a0a0a;line-height:15.2px;white-space:nowrap;-webkit-text-stroke:0.25px #0a0a0a;">1.Newly designed Invoice PDF.&nbsp; 2.Added round off feature.</div>
<div class="abs" style="left:11.2px;top:773.6px;font-size:13.2px;font-weight:normal;color:#0a0a0a;line-height:15.2px;white-space:nowrap;-webkit-text-stroke:0.25px #0a0a0a;">3.Revised subtotal amount display.</div>
<div class="abs" style="left:253.2px;width:400px;text-align:right;top:703.6px;font-size:13.2px;font-weight:bold;color:#0a0a0a;line-height:15.2px;white-space:nowrap;">Sub Total</div>
<div class="abs" style="left:379.4px;width:400px;text-align:right;top:703.6px;font-size:13.2px;font-weight:bold;color:#0a0a0a;line-height:15.2px;white-space:nowrap;">$449.00</div>
<div class="abs" style="left:253.2px;width:400px;text-align:right;top:719.8px;font-size:13.2px;font-weight:normal;color:#0a0a0a;line-height:15.2px;white-space:nowrap;-webkit-text-stroke:0.25px #0a0a0a;">Discount (10%)</div>
<div class="abs" style="left:379.4px;width:400px;text-align:right;top:719.8px;font-size:13.2px;font-weight:normal;color:#0a0a0a;line-height:15.2px;white-space:nowrap;-webkit-text-stroke:0.25px #0a0a0a;">$44.90</div>
<div class="abs" style="left:253.2px;width:400px;text-align:right;top:733.4px;font-size:13.2px;font-weight:normal;color:#0a0a0a;line-height:15.2px;white-space:nowrap;-webkit-text-stroke:0.25px #0a0a0a;">Inline Discount</div>
<div class="abs" style="left:379.4px;width:400px;text-align:right;top:733.4px;font-size:13.2px;font-weight:normal;color:#0a0a0a;line-height:15.2px;white-space:nowrap;-webkit-text-stroke:0.25px #0a0a0a;">$11.00</div>
<div class="abs" style="left:253.2px;width:400px;text-align:right;top:749.2px;font-size:13.2px;font-weight:normal;color:#0a0a0a;line-height:15.2px;white-space:nowrap;-webkit-text-stroke:0.25px #0a0a0a;">Shipping Cost</div>
<div class="abs" style="left:379.4px;width:400px;text-align:right;top:749.2px;font-size:13.2px;font-weight:normal;color:#0a0a0a;line-height:15.2px;white-space:nowrap;-webkit-text-stroke:0.25px #0a0a0a;">$100.00</div>
<div class="abs" style="left:253.2px;width:400px;text-align:right;top:763.4px;font-size:13.2px;font-weight:normal;color:#0a0a0a;line-height:15.2px;white-space:nowrap;-webkit-text-stroke:0.25px #0a0a0a;">GST on $270.00</div>
<div class="abs" style="left:379.4px;width:400px;text-align:right;top:763.4px;font-size:13.2px;font-weight:normal;color:#0a0a0a;line-height:15.2px;white-space:nowrap;-webkit-text-stroke:0.25px #0a0a0a;">$13.50</div>
<div class="abs" style="left:253.2px;width:400px;text-align:right;top:787.2px;font-size:13.2px;font-weight:bold;color:#0a0a0a;line-height:15.2px;white-space:nowrap;">Total</div>
<div class="abs" style="left:379.4px;width:400px;text-align:right;top:787.2px;font-size:13.2px;font-weight:bold;color:#0a0a0a;line-height:15.2px;white-space:nowrap;">$517.80</div>
<div class="abs" style="left:253.2px;width:400px;text-align:right;top:801.4px;font-size:13.2px;font-weight:bold;color:#0a0a0a;line-height:15.2px;white-space:nowrap;">Amount Paid</div>
<div class="abs" style="left:379.4px;width:400px;text-align:right;top:801.4px;font-size:13.2px;font-weight:bold;color:#0a0a0a;line-height:15.2px;white-space:nowrap;">$100.00</div>
<div class="abs" style="left:253.2px;width:400px;text-align:right;top:817.0px;font-size:13.2px;font-weight:bold;color:#0a0a0a;line-height:15.2px;white-space:nowrap;">Amount Due</div>
<div class="abs" style="left:379.4px;width:400px;text-align:right;top:817.0px;font-size:13.2px;font-weight:bold;color:#0a0a0a;line-height:15.2px;white-space:nowrap;">$417.80</div>
</div>
<div class="abs" style="left:269px;top:123px;font-size:11px;font-weight:bold;color:#111;line-height:13px">INVOICE</div>
<div class="abs" style="left:448px;top:127px;font-size:10px;font-style:italic;color:#8a8a8a;line-height:11px">(Original)</div>
<div class="abs" style="left:254px;top:715px;font-size:6.5px;color:#444;line-height:8px">Created by</div>
<svg class="abs" style="left:288.5px;top:715px" width="7.5" height="8" viewBox="0 0 8 8"><path d="M0.5 0.5H6L7.5 2V7.5L5.7 6 4 7.5 2.3 6 0.5 7.5Z" fill="#1f6fe0"/></svg>
<div class="abs" style="left:298px;top:714.5px;font-size:6.5px;font-weight:bold;color:#1f6fe0;line-height:8px;letter-spacing:-0.4px">moon<span style="color:#2a2f6a">invoice</span></div>
<div class="abs" style="left:322px;top:721px;font-size:3px;color:#777;line-height:4px">easy invoicing</div>
  <!-- settings -->
<div class="abs" style="left:587px;top:99.0px;width:385px;height:45.7px;background:#fff"></div>
<div class="abs" style="left:602px;top:112.0px;font-size:14px;color:#333;line-height:18px;letter-spacing:-0.2px">Due Date</div>
<div class="abs" style="left:921px;top:115.3px;width:36px;height:13px;border-radius:6.5px;background:#8fc3fb"></div>
<div class="abs" style="left:936.5px;top:111.3px;width:21px;height:21px;border-radius:50%;background:#007bff;box-shadow:0 1px 2px rgba(0,0,0,.3)"></div>
<div class="abs" style="left:587px;top:144.7px;width:385px;height:47.9px;background:#fff"></div>
<div class="abs" style="left:602px;top:158.8px;font-size:14px;color:#333;line-height:18px;letter-spacing:-0.2px">Total Outstanding</div>
<div class="abs" style="left:921px;top:162.1px;width:36px;height:13px;border-radius:6.5px;background:#d6d6d6"></div>
<div class="abs" style="left:920.5px;top:158.1px;width:21px;height:21px;border-radius:50%;background:#fafafa;box-shadow:0 1px 3px rgba(0,0,0,.4)"></div>
<div class="abs" style="left:587px;top:192.6px;width:385px;height:47.9px;background:#fff"></div>
<div class="abs" style="left:602px;top:206.8px;font-size:14px;color:#333;line-height:18px;letter-spacing:-0.2px">QR Code</div>
<div class="abs" style="left:921px;top:210.1px;width:36px;height:13px;border-radius:6.5px;background:#8fc3fb"></div>
<div class="abs" style="left:936.5px;top:206.1px;width:21px;height:21px;border-radius:50%;background:#007bff;box-shadow:0 1px 2px rgba(0,0,0,.3)"></div>
<div class="abs" style="left:587px;top:240.5px;width:385px;height:47.9px;background:#fff"></div>
<div class="abs" style="left:602px;top:254.6px;font-size:14px;color:#333;line-height:18px;letter-spacing:-0.2px">QR Code Alignment</div>
<div class="abs" style="left:798px;top:246px;width:159.5px;height:36.5px;border:1px solid #d8d8d8;border-radius:4px;background:#fff"></div>
<div class="abs" style="left:814px;top:254.6px;font-size:14px;color:#333;line-height:18px;letter-spacing:-0.2px">Center</div>
<svg class="abs" style="left:927px;top:261px" width="10" height="6" viewBox="0 0 10 6"><path d="M0 0h10L5 5z" fill="#555"/></svg>
<div class="abs" style="left:587px;top:288.4px;width:385px;height:47.9px;background:#fff"></div>
<div class="abs" style="left:602px;top:302.6px;font-size:14px;color:#333;line-height:18px;letter-spacing:-0.2px">Document Copy Label</div>
<div class="abs" style="left:921px;top:305.9px;width:36px;height:13px;border-radius:6.5px;background:#8fc3fb"></div>
<div class="abs" style="left:936.5px;top:301.9px;width:21px;height:21px;border-radius:50%;background:#007bff;box-shadow:0 1px 2px rgba(0,0,0,.3)"></div>
<div class="abs" style="left:587px;top:336.3px;width:385px;height:47.9px;background:#fff"></div>
<div class="abs" style="left:602px;top:350.4px;font-size:14px;color:#333;line-height:18px;letter-spacing:-0.2px">Total Amount</div>
<div class="abs" style="left:921px;top:353.8px;width:36px;height:13px;border-radius:6.5px;background:#8fc3fb"></div>
<div class="abs" style="left:936.5px;top:349.8px;width:21px;height:21px;border-radius:50%;background:#007bff;box-shadow:0 1px 2px rgba(0,0,0,.3)"></div>
<div class="abs" style="left:587px;top:384.2px;width:385px;height:47.9px;background:#fff"></div>
<div class="abs" style="left:602px;top:398.3px;font-size:14px;color:#333;line-height:18px;letter-spacing:-0.2px">Credit Note Applied #</div>
<div class="abs" style="left:921px;top:401.6px;width:36px;height:13px;border-radius:6.5px;background:#d6d6d6"></div>
<div class="abs" style="left:920.5px;top:397.6px;width:21px;height:21px;border-radius:50%;background:#fafafa;box-shadow:0 1px 3px rgba(0,0,0,.4)"></div>
<div class="abs" style="left:587px;top:432.1px;width:385px;height:47.9px;background:#fff"></div>
<div class="abs" style="left:602px;top:446.2px;font-size:14px;color:#333;line-height:18px;letter-spacing:-0.2px">Credit Note Issued #</div>
<div class="abs" style="left:921px;top:449.6px;width:36px;height:13px;border-radius:6.5px;background:#8fc3fb"></div>
<div class="abs" style="left:936.5px;top:445.6px;width:21px;height:21px;border-radius:50%;background:#007bff;box-shadow:0 1px 2px rgba(0,0,0,.3)"></div>
<div class="abs" style="left:587px;top:480.0px;width:385px;height:47.9px;background:#f5f5f5"></div>
<div class="abs" style="left:602px;top:494.1px;font-size:14px;color:#333;line-height:18px;letter-spacing:-0.2px">Company</div>
<svg class="abs" style="left:946px;top:499.9px" width="14" height="9" viewBox="0 0 14 9"><path d="M1.5 1.8 L7 7 L12.5 1.8" fill="none" stroke="#555" stroke-width="1.7"/></svg>
<div class="abs" style="left:587px;top:527.9px;width:385px;height:47.9px;background:#f5f5f5"></div>
<div class="abs" style="left:602px;top:542.0px;font-size:14px;color:#333;line-height:18px;letter-spacing:-0.2px">Contact</div>
<svg class="abs" style="left:946px;top:547.8px" width="14" height="9" viewBox="0 0 14 9"><path d="M1.5 1.8 L7 7 L12.5 1.8" fill="none" stroke="#555" stroke-width="1.7"/></svg>
<div class="abs" style="left:587px;top:575.8px;width:385px;height:47.9px;background:#f5f5f5"></div>
<div class="abs" style="left:602px;top:590.0px;font-size:14px;color:#333;line-height:18px;letter-spacing:-0.2px">Summary</div>
<svg class="abs" style="left:946px;top:595.8px" width="14" height="9" viewBox="0 0 14 9"><path d="M1.5 1.8 L7 7 L12.5 1.8" fill="none" stroke="#555" stroke-width="1.7"/></svg>
<div class="abs" style="left:587px;top:623.7px;width:385px;height:47.9px;background:#f5f5f5"></div>
<div class="abs" style="left:602px;top:637.9px;font-size:14px;color:#333;line-height:18px;letter-spacing:-0.2px">Notes &amp; Terms</div>
<svg class="abs" style="left:946px;top:643.7px" width="14" height="9" viewBox="0 0 14 9"><path d="M1.5 1.8 L7 7 L12.5 1.8" fill="none" stroke="#555" stroke-width="1.7"/></svg>
<div class="abs" style="left:587px;top:671.6px;width:385px;height:47.9px;background:#f5f5f5"></div>
<div class="abs" style="left:602px;top:685.8px;font-size:14px;color:#333;line-height:18px;letter-spacing:-0.2px">Signature</div>
<svg class="abs" style="left:946px;top:691.5px" width="14" height="9" viewBox="0 0 14 9"><path d="M1.5 1.8 L7 7 L12.5 1.8" fill="none" stroke="#555" stroke-width="1.7"/></svg>
<div class="abs" style="left:587px;top:719.5px;width:385px;height:11.5px;background:#f5f5f5"></div>
<div class="abs" style="left:587px;top:144.2px;width:385px;height:1px;background:#d9d9d9"></div>
<div class="abs" style="left:587px;top:192.1px;width:385px;height:1px;background:#d9d9d9"></div>
<div class="abs" style="left:587px;top:240.0px;width:385px;height:1px;background:#d9d9d9"></div>
<div class="abs" style="left:587px;top:287.9px;width:385px;height:1px;background:#d9d9d9"></div>
<div class="abs" style="left:587px;top:335.8px;width:385px;height:1px;background:#d9d9d9"></div>
<div class="abs" style="left:587px;top:383.7px;width:385px;height:1px;background:#d9d9d9"></div>
<div class="abs" style="left:587px;top:431.6px;width:385px;height:1px;background:#d9d9d9"></div>
<div class="abs" style="left:587px;top:479.5px;width:385px;height:1px;background:#d9d9d9"></div>
<div class="abs" style="left:587px;top:527.4px;width:385px;height:1px;background:#d9d9d9"></div>
<div class="abs" style="left:587px;top:575.3px;width:385px;height:1px;background:#d9d9d9"></div>
<div class="abs" style="left:587px;top:623.2px;width:385px;height:1px;background:#d9d9d9"></div>
<div class="abs" style="left:587px;top:671.1px;width:385px;height:1px;background:#d9d9d9"></div>
<div class="abs" style="left:587px;top:719.0px;width:385px;height:1px;background:#d9d9d9"></div>
<div class="abs" style="left:587px;top:382px;width:167px;height:53px;border:3.5px solid #e8121a"></div>
<div class="abs" style="left:909px;top:383px;width:57px;height:51.5px;border:3.5px solid #e8121a"></div>
  <!-- scrollbar -->
  <div class="abs" style="left:972px;top:99px;width:5px;height:632px;background:#f1f1f1"></div>
  <div class="abs" style="left:972.5px;top:391px;width:4px;height:298px;border-radius:2px;background:#c1c1c1"></div>

  <!-- footer -->
  <div class="hl" style="left:0;top:730px;width:977px;height:2px;background:#e2e2e2"></div>
  <svg class="abs" style="left:36.5px;top:749px" width="20" height="20" viewBox="0 0 20 20"><path d="M15.6 11 A6.2 6.2 0 1 1 13.2 4.8" fill="none" stroke="#7a7a7a" stroke-width="2.1"/><path d="M11 1.6 L17.4 1.8 L16.6 8.2 Z" fill="#7a7a7a"/></svg>
  <div class="abs" style="left:29.5px;top:770px;font-size:14px;color:#8a8a8a;line-height:17px;letter-spacing:-0.4px">Reset</div>
  <svg class="abs" style="left:98px;top:749px" width="22" height="18" viewBox="0 0 22 18"><path d="M1 9 C4 3.5 7.5 1.8 11 1.8 C14.5 1.8 18 3.5 21 9 C18 14.5 14.5 16.2 11 16.2 C7.5 16.2 4 14.5 1 9 Z" fill="#7a7a7a"/><circle cx="11" cy="9" r="4" fill="#fff"/><circle cx="11" cy="9" r="2.3" fill="#7a7a7a"/></svg>
  <div class="abs" style="left:86.5px;top:770px;font-size:14px;color:#8a8a8a;line-height:17px;letter-spacing:-0.4px">Preview</div>
  <svg class="abs" style="left:164px;top:747px" width="21" height="21" viewBox="0 0 20 20"><g transform="rotate(45 10 10)"><rect x="8.7" y="-2" width="2.6" height="10" rx="1.3" fill="#7a7a7a"/><rect x="6.3" y="8" width="7.4" height="3.2" fill="#7a7a7a"/><path d="M5.6 11.8 H14.4 V17 C14.4 19 13 20.5 11.5 21 H5.6 Z" fill="#7a7a7a"/></g></svg>
  <div class="abs" style="left:152.5px;top:770px;font-size:14px;color:#8a8a8a;line-height:17px;letter-spacing:-0.4px">Default</div>
  <svg class="abs" style="left:261px;top:747px" width="18" height="22" viewBox="0 0 18 22"><path d="M2.2 5 V20.3 H12.5" fill="none" stroke="#7a7a7a" stroke-width="1.6"/><path d="M4.8 1.5 H11.5 L15.8 5.8 V17.8 H4.8 Z" fill="#7a7a7a"/><path d="M11.5 1.5 V5.8 H15.8" fill="#b0b0b0"/><path d="M7 9.5h6.5M7 12h6.5M7 14.5h6.5" stroke="#fff" stroke-width="1.2"/></svg>
  <div class="abs" style="left:214.5px;top:770px;font-size:14px;color:#8a8a8a;line-height:17px;letter-spacing:-0.4px">Standard Business</div>
</div></div>

</body></html>
